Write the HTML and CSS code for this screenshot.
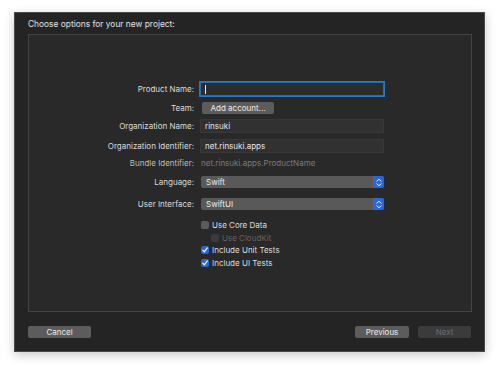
FILE: index.html
```html
<!DOCTYPE html>
<html>
<head>
<meta charset="utf-8">
<link rel="stylesheet" href="styles.css">
</head>
<body>
<div class="window">
  <div class="title">Choose options for your new project:</div>
  <div class="panel">
    <div class="row r-product">
      <div class="label">Product Name:</div>
      <div class="field focus"><span class="caret"></span></div>
    </div>
    <div class="row r-team">
      <div class="label">Team:</div>
      <div class="btn add">Add account...</div>
    </div>
    <div class="row r-org">
      <div class="label">Organization Name:</div>
      <div class="field">rinsuki</div>
    </div>
    <div class="row r-orgid">
      <div class="label">Organization Identifier:</div>
      <div class="field">net.rinsuki.apps</div>
    </div>
    <div class="row r-bundle">
      <div class="label">Bundle Identifier:</div>
      <div class="static">net.rinsuki.apps.ProductName</div>
    </div>
    <div class="row r-lang">
      <div class="label">Language:</div>
      <div class="popup"><span class="pv">Swift</span><span class="chev"><svg width="6" height="9" viewBox="0 0 6 9"><path d="M1 3.2 L3 1.2 L5 3.2 M1 5.8 L3 7.8 L5 5.8" fill="none" stroke="#fff" stroke-width="1" stroke-linecap="round" stroke-linejoin="round"/></svg></span></div>
    </div>
    <div class="row r-ui">
      <div class="label">User Interface:</div>
      <div class="popup"><span class="pv">SwiftUI</span><span class="chev"><svg width="6" height="9" viewBox="0 0 6 9"><path d="M1 3.2 L3 1.2 L5 3.2 M1 5.8 L3 7.8 L5 5.8" fill="none" stroke="#fff" stroke-width="1" stroke-linecap="round" stroke-linejoin="round"/></svg></span></div>
    </div>
    <div class="checks">
      <div class="check"><span class="box"></span><span>Use Core Data</span></div>
      <div class="check sub disabled"><span class="box"></span><span>Use CloudKit</span></div>
      <div class="check"><span class="box on"><svg width="8" height="8" viewBox="0 0 8 8"><path d="M1.8 4.2 L3.3 5.8 L6.3 1.9" fill="none" stroke="#fff" stroke-width="1.2" stroke-linecap="round" stroke-linejoin="round"/></svg></span><span>Include Unit Tests</span></div>
      <div class="check"><span class="box on"><svg width="8" height="8" viewBox="0 0 8 8"><path d="M1.8 4.2 L3.3 5.8 L6.3 1.9" fill="none" stroke="#fff" stroke-width="1.2" stroke-linecap="round" stroke-linejoin="round"/></svg></span><span>Include UI Tests</span></div>
    </div>
  </div>
  <div class="footer">
    <div class="btn fbtn">Cancel</div>
    <div class="spacer"></div>
    <div class="btn fbtn prev">Previous</div>
    <div class="btn fbtn next">Next</div>
  </div>
</div>
</body>
</html>
```

FILE: styles.css
```css
html, body {
  margin: 0;
  padding: 0;
  background: #ffffff;
}
body {
  font-family: Inter, "Noto Sans", "Liberation Sans", sans-serif;
  font-size: 8px;
  color: #dedede;
  width: 500px;
  height: 369px;
  overflow: hidden;
}
.window {
  margin: 12px 0 0 14px;
  width: 471px;
  height: 340px;
  box-sizing: border-box;
  background: #242424;
  border: 1px solid #4a4a4a;
  box-shadow: 0 3px 10px rgba(0,0,0,0.22);
  display: flex;
  flex-direction: column;
}
.title {
  height: 21px;
  line-height: 22px;
  padding-left: 13px;
  color: #e2e2e2;
  font-size: 8.4px;
}
.panel {
  margin: 0 12px 0 13px;
  height: 278px;
  box-sizing: border-box;
  background: #292929;
  border: 1px solid #444;
  padding-top: 47px;
  display: flex;
  flex-direction: column;
}
.row {
  display: flex;
  align-items: center;
}
.label {
  width: 165px;
  text-align: right;
  margin-right: 6px;
  color: #dcdcdc;
  white-space: nowrap;
}
.field {
  width: 184px;
  height: 14px;
  box-sizing: border-box;
  background: #313131;
  border: 1px solid #383838;
  padding-left: 4px;
  line-height: 12px;
  color: #e6e6e6;
}
.field.focus {
  border: 1px solid #1f6fb8;
  box-shadow: 0 0 0 1px #2a78c2;
  background: #2c2c2c;
}
.caret {
  display: inline-block;
  width: 1px;
  height: 9px;
  background: #e8e8e8;
  vertical-align: middle;
  margin-top: -1px;
}
.r-team { margin-top: 6px; }
.r-org { margin-top: 5px; }
.r-orgid { margin-top: 6px; }
.r-bundle { margin-top: 4px; height: 12px; }
.r-bundle .label { color: #bdbdbd; }
.static { color: #7c7c7c; padding-left: 1px; }
.r-lang { margin-top: 7px; }
.r-ui { margin-top: 10px; }
.btn {
  box-sizing: border-box;
  height: 12px;
  line-height: 12px;
  border-radius: 2px;
  background: #5c5c5c;
  color: #ececec;
  text-align: center;
  font-size: 8px;
}
.add {
  width: 72px;
  margin-left: 2px;
}
.popup {
  width: 183px;
  height: 12px;
  margin-left: 1px;
  border-radius: 2px;
  background: #595959;
  display: flex;
  align-items: center;
  overflow: hidden;
}
.pv {
  flex: 1;
  padding-left: 5px;
  color: #ececec;
}
.chev {
  width: 11px;
  height: 12px;
  background: #2a67d9;
  border-radius: 0 2px 2px 0;
  display: flex;
  align-items: center;
  justify-content: center;
}
.checks {
  margin-top: 11px;
  margin-left: 172px;
  display: flex;
  flex-direction: column;
}
.check {
  display: flex;
  align-items: center;
  height: 8px;
  margin-bottom: 4.5px;
  color: #dedede;
}
.check .box {
  width: 8px;
  height: 8px;
  box-sizing: border-box;
  border-radius: 2px;
  background: #5b5b5b;
  margin-right: 3px;
  display: flex;
  align-items: center;
  justify-content: center;
}
.check .box.on {
  background: #2a66d6;
}
.check.sub {
  margin-left: 10px;
}
.check.disabled { color: #636363; }
.check.disabled .box { background: #3a3a3a; }
.footer {
  display: flex;
  margin: 14px 13px 0 13px;
}
.spacer { flex: 1; }
.fbtn {
  width: 63px;
  height: 12px;
}
.prev {
  width: 54px;
  margin-right: 9px;
}
.next {
  width: 53px;
  background: #3b3b3b;
  color: #6e6e6e;
}
```
